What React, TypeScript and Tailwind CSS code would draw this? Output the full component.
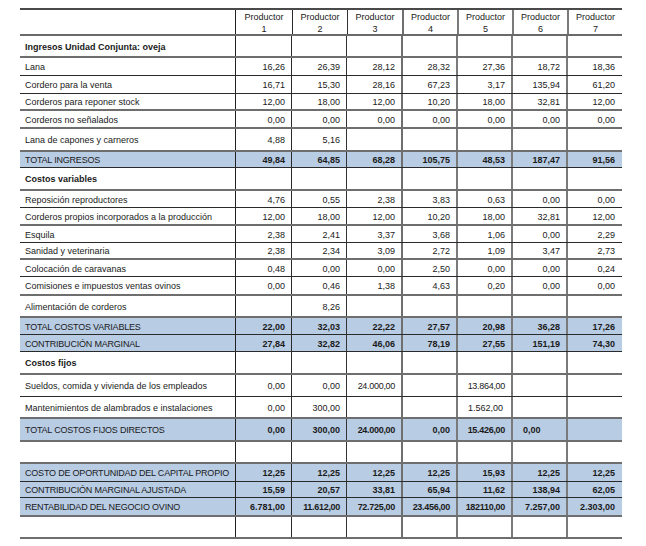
import React from "react";

type Row = {
  kind: "section" | "item" | "total" | "blank";
  label?: string;
  vals?: string[];
  h: number;
  line: "thin" | "thick";
  left?: number[];
};

const E = ["", "", "", "", "", "", ""];

const rows: Row[] = [
  { kind: "section", label: "Ingresos Unidad Conjunta: oveja", h: 22, line: "thick" },
  { kind: "item", label: "Lana", vals: ["16,26", "26,39", "28,12", "28,32", "27,36", "18,72", "18,36"], h: 18, line: "thin" },
  { kind: "item", label: "Cordero para la venta", vals: ["16,71", "15,30", "28,16", "67,23", "3,17", "135,94", "61,20"], h: 18, line: "thin" },
  { kind: "item", label: "Corderos para reponer stock", vals: ["12,00", "18,00", "12,00", "10,20", "18,00", "32,81", "12,00"], h: 17, line: "thick" },
  { kind: "item", label: "Corderos no señalados", vals: ["0,00", "0,00", "0,00", "0,00", "0,00", "0,00", "0,00"], h: 18, line: "thick" },
  { kind: "item", label: "Lana de capones y carneros", vals: ["4,88", "5,16", "", "", "", "", ""], h: 23, line: "thick" },
  { kind: "total", label: "TOTAL INGRESOS", vals: ["49,84", "64,85", "68,28", "105,75", "48,53", "187,47", "91,56"], h: 16, line: "thin" },
  { kind: "section", label: "Costos variables", h: 23, line: "thick" },
  { kind: "item", label: "Reposición reproductores", vals: ["4,76", "0,55", "2,38", "3,83", "0,63", "0,00", "0,00"], h: 17, line: "thin" },
  { kind: "item", label: "Corderos propios incorporados a la producción", vals: ["12,00", "18,00", "12,00", "10,20", "18,00", "32,81", "12,00"], h: 18, line: "thick" },
  { kind: "item", label: "Esquila", vals: ["2,38", "2,41", "3,37", "3,68", "1,06", "0,00", "2,29"], h: 17, line: "thin" },
  { kind: "item", label: "Sanidad y veterinaria", vals: ["2,38", "2,34", "3,09", "2,72", "1,09", "3,47", "2,73"], h: 17, line: "thick" },
  { kind: "item", label: "Colocación de caravanas", vals: ["0,48", "0,00", "0,00", "2,50", "0,00", "0,00", "0,24"], h: 17, line: "thin" },
  { kind: "item", label: "Comisiones e impuestos ventas ovinos", vals: ["0,00", "0,46", "1,38", "4,63", "0,20", "0,00", "0,00"], h: 19, line: "thick" },
  { kind: "item", label: "Alimentación de corderos", vals: ["", "8,26", "", "", "", "", ""], h: 22, line: "thick" },
  { kind: "total", label: "TOTAL COSTOS VARIABLES", vals: ["22,00", "32,03", "22,22", "27,57", "20,98", "36,28", "17,26"], h: 17, line: "thin" },
  { kind: "total", label: "CONTRIBUCIÓN MARGINAL", vals: ["27,84", "32,82", "46,06", "78,19", "27,55", "151,19", "74,30"], h: 17, line: "thin" },
  { kind: "section", label: "Costos fijos", h: 23, line: "thick" },
  { kind: "item", label: "Sueldos, comida y vivienda de los empleados", vals: ["0,00", "0,00", "24.000,00", "", "13.864,00", "", ""], h: 22, line: "thin" },
  { kind: "item", label: "Mantenimientos de alambrados e instalaciones", vals: ["0,00", "300,00", "", "", "1.562,00", "", ""], h: 22, line: "thick", left: [4] },
  { kind: "total", label: "TOTAL COSTOS FIJOS DIRECTOS", vals: ["0,00", "300,00", "24.000,00", "0,00", "15.426,00", "0,00", ""], h: 23, line: "thick", left: [5] },
  { kind: "blank", vals: E, h: 22, line: "thick" },
  { kind: "total", label: "COSTO DE OPORTUNIDAD DEL CAPITAL PROPIO", vals: ["12,25", "12,25", "12,25", "12,25", "15,93", "12,25", "12,25"], h: 18, line: "thin" },
  { kind: "total", label: "CONTRIBUCIÓN MARGINAL AJUSTADA", vals: ["15,59", "20,57", "33,81", "65,94", "11,62", "138,94", "62,05"], h: 16, line: "thin" },
  { kind: "total", label: "RENTABILIDAD DEL NEGOCIO OVINO", vals: ["6.781,00", "11.612,00", "72.725,00", "23.456,00", "182110,00", "7.257,00", "2.303,00"], h: 19, line: "thick" },
  { kind: "blank", vals: E, h: 22, line: "thick" },
];

// column separators: first three dark & thin, the rest grey & heavier
const colBorder = [
  "border-l border-[#222]",
  "border-l border-[#2a2a2a]",
  "border-l border-[#333]",
  "border-l-2 border-[#6f6f6f]",
  "border-l-2 border-[#7a7a7a]",
  "border-l-2 border-[#7a7a7a]",
  "border-l-2 border-[#7a7a7a]",
];
const colWidth = ["w-[56px]", "w-[55px]", "w-[55px]", "w-[55px]", "w-[55px]", "w-[55px]", "w-[55px]"];

function Cells({ vals, bold, left }: { vals: string[]; bold?: boolean; left?: number[] }) {
  return (
    <>
      {vals.map((v, i) => {
        const isLeft = left?.includes(i);
        return (
          <div
            key={i}
            className={`${colWidth[i]} ${colBorder[i]} flex h-full shrink-0 items-center whitespace-nowrap pt-[3px] ${
              isLeft ? "justify-start pl-[10px]" : "justify-end pr-[6px]"
            } ${bold ? "font-bold" : ""} ${v.length > 8 ? "tracking-[-0.3px]" : ""}`}
          >
            {v}
          </div>
        );
      })}
    </>
  );
}

export default function App() {
  return (
    <div className="h-[546px] w-[646px] bg-white pt-[8px] font-['Liberation_Sans',Arial,sans-serif] text-[9px] text-[#1a1a1a]">
      <div className="ml-[20px] w-[602px] border-t-2 border-[#4a4a4a]">
        <div className="flex h-[26px] border-b-2 border-[#6a6a6a]">
          <div className="w-[216px] shrink-0 border-r border-[#222]" />
          {["1", "2", "3", "4", "5", "6", "7"].map((n, i) => (
            <div
              key={n}
              className={`${colWidth[i]} ${i === 0 ? "" : colBorder[i]} flex shrink-0 flex-col items-center justify-center pt-[3px] leading-[11.5px]`}
            >
              <span>Productor</span>
              <span>{n}</span>
            </div>
          ))}
        </div>
        {rows.map((r, idx) => {
          const line = r.line === "thick" ? "border-b-2 border-[#6e6e6e]" : "border-b border-[#2a2a2a]";
          const vals = r.vals ?? E;
          return (
            <div
              key={idx}
              style={{ height: r.h }}
              className={`flex ${line} ${r.kind === "total" ? "bg-[#b8cce4]" : ""}`}
            >
              <div
                className={`flex h-full w-[216px] shrink-0 items-center whitespace-nowrap pl-[5px] pt-[3px] ${
                  r.kind === "section" ? "font-bold" : ""
                } ${r.kind === "total" ? "tracking-[-0.2px]" : ""}`}
              >
                {r.label}
              </div>
              <div className="-ml-px flex h-full">
                <Cells vals={vals} bold={r.kind === "total"} left={r.left} />
              </div>
            </div>
          );
        })}
      </div>
    </div>
  );
}
